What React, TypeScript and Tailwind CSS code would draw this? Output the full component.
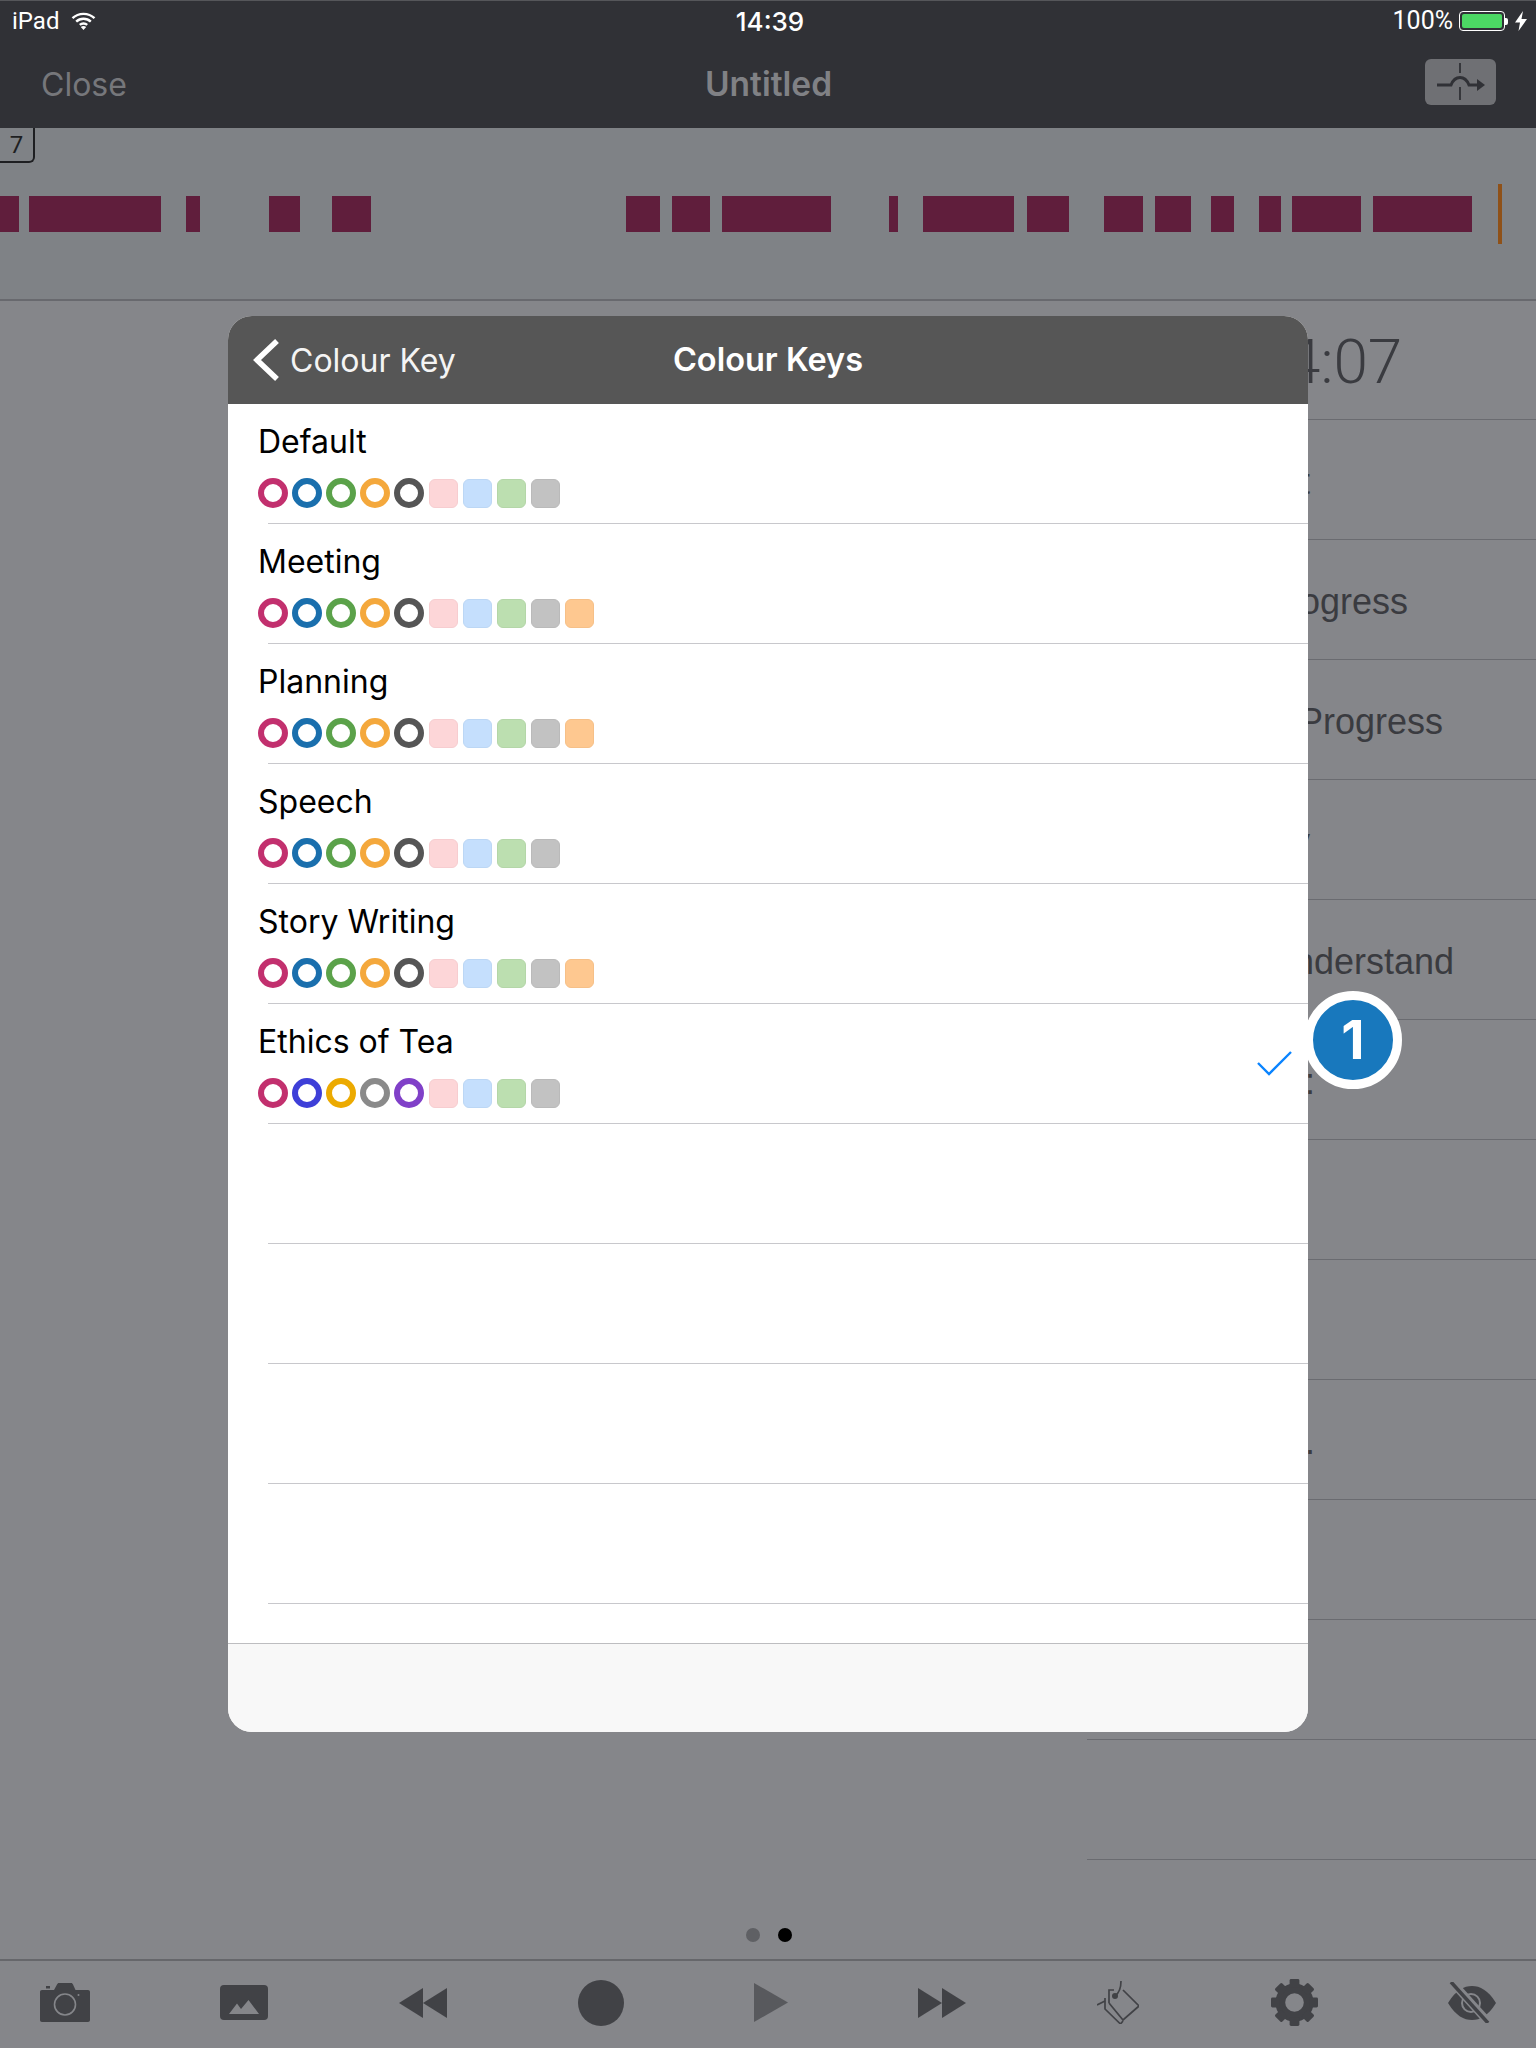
const bars: [number, number][] = [
  [0, 19], [29, 132], [186, 14], [269, 31], [332, 39], [626, 34], [672, 38], [722, 109], [889, 9], [923, 91],
  [1027, 42], [1104, 39], [1155, 36], [1211, 23], [1259, 22], [1292, 69], [1373, 99],
];

const ringSets = {
  standard: ["border-[#c2306e]", "border-[#1a6fad]", "border-[#5ba24a]", "border-[#f4a83c]", "border-[#555555]"],
  ethics: ["border-[#c2306e]", "border-[#3e3fd8]", "border-[#ecaa00]", "border-[#8a8a8a]", "border-[#8040c8]"],
};

const baseSquares = [
  "bg-[#fdd6d8] border-[#f7cdd0]",
  "bg-[#c5dffd] border-[#bcd7f5]",
  "bg-[#bcdfb0] border-[#b4d6a8]",
  "bg-[#c2c2c2] border-[#bababa]",
];
const orangeSquare = "bg-[#fec890] border-[#f6c088]";

const rows = [
  { name: "Default", rings: ringSets.standard, squares: baseSquares },
  { name: "Meeting", rings: ringSets.standard, squares: [...baseSquares, orangeSquare] },
  { name: "Planning", rings: ringSets.standard, squares: [...baseSquares, orangeSquare] },
  { name: "Speech", rings: ringSets.standard, squares: baseSquares },
  { name: "Story Writing", rings: ringSets.standard, squares: [...baseSquares, orangeSquare] },
  { name: "Ethics of Tea", rings: ringSets.ethics, squares: baseSquares, checked: true },
  { name: "" }, { name: "" }, { name: "" }, { name: "" },
];

const listRows = [
  { text: "t", ml: "ml-[213px]" },
  { text: "In Progress", ml: "ml-[137px]" },
  { text: "In Progress", ml: "ml-[172px]" },
  { text: "y", ml: "ml-[205px]" },
  { text: "Understand", ml: "ml-[181px]" },
  { text: ":", ml: "ml-[218px]" },
  { text: "", ml: "" }, { text: "", ml: "" },
  { text: ".", ml: "ml-[218px]" },
  { text: "", ml: "" }, { text: "", ml: "" }, { text: "", ml: "" },
];

function Wifi() {
  return (
    <svg width="25" height="18" viewBox="0 0 25 18" fill="none" stroke="#fff" strokeWidth="2.4">
      <path d="M1.5 6.2C7.5 .4 17.5 .4 23.5 6.2" />
      <path d="M5.2 9.6C9.2 5.8 15.8 5.8 19.8 9.6" />
      <path d="M8.8 12.8C10.8 11 14.2 11 16.2 12.8" />
      <path d="M12.5 18L9.8 15C11.4 13.8 13.6 13.8 15.2 15Z" fill="#fff" stroke="none" />
    </svg>
  );
}

function Toolbar() {
  const dark = "#414246";
  return (
    <div className="h-[89px] border-t-2 border-[#66676b] flex items-center justify-between px-[40px] pb-[4px]">
      <svg width="50" height="39" viewBox="0 0 50 39">
        <path d="M2 7H14L17 1.5C17.4.6 18 0 19 0H31C32 0 32.7.6 33 1.5L35.500 7H48C49.200 7 50 7.800 50 9V37C50 38.200 49.200 39 48 39H2C.8 39 0 38.200 0 37V9C0 7.800.8 7 2 7Z" fill={dark} />
        <circle cx="25" cy="21.500" r="10.500" fill="none" stroke="#85868a" strokeWidth="1.600" />
        <rect x="6" y="3" width="4" height="2.500" fill={dark} />
        <circle cx="38.500" cy="12" r="1" fill="#85868a" />
      </svg>
      <svg width="48" height="35" viewBox="0 0 48 35">
        <rect width="48" height="35" rx="4" fill={dark} />
        <path d="M9 29L17 18.500L21 24L28.500 15L39 29Z" fill="#85868a" />
      </svg>
      <svg width="48" height="30" viewBox="0 0 48 30" fill={dark}>
        <path d="M24 0V30L0 15Z" />
        <path d="M48 0V30L24 15Z" />
      </svg>
      <div className="w-[46px] h-[46px] ml-[1px] rounded-full bg-[#414246]" />
      <svg width="34" height="39" viewBox="0 0 34 39" fill="#58595d">
        <path d="M0 0L34 19.500L0 39Z" />
      </svg>
      <svg width="48" height="30" viewBox="0 0 48 30" fill={dark}>
        <path d="M0 0V30L24 15Z" />
        <path d="M24 0V30L48 15Z" />
      </svg>
      <svg width="42" height="43" viewBox="0 0 42 43" fill="none" stroke={dark} strokeWidth="1.700">
        <path d="M0 24L8 20" />
        <path d="M8 17V28L23.500 43L26 40" />
        <path d="M12 22V9H17M26 9L42 25L26 39L12 22" />
        <path d="M18 15C22 12 24 6 24 0" />
        <circle cx="18" cy="15" r="3" fill={dark} stroke="none" />
      </svg>
      <svg width="47" height="47" viewBox="0 0 48 48" fill={dark} className="ml-[2px]">
        <circle cx="24" cy="24" r="14.500" fill="none" stroke={dark} strokeWidth="10" />
        {[0, 45, 90, 135, 180, 225, 270, 315].map((a) => (
          <rect key={a} x="19" y="0" width="10" height="9" rx="1.500" transform={`rotate(${a} 24 24)`} />
        ))}
      </svg>
      <svg width="48" height="41" viewBox="0 0 48 41" fill="none">
        <path d="M0 21C8 8 16 4 24 4C32 4 40 8 48 21C40 34 32 38 24 38C16 38 8 34 0 21Z" fill={dark} />
        <circle cx="23" cy="21" r="9" stroke="#85868a" strokeWidth="2" />
        <path d="M4 0L41 41" stroke="#85868a" strokeWidth="8" />
        <path d="M3 0L40 41" stroke={dark} strokeWidth="3.500" />
      </svg>
    </div>
  );
}

export default function App() {
  return (
    <div className="relative w-[1536px] h-[2048px] overflow-hidden bg-[#85868a] flex flex-col font-['Inter',sans-serif]">
      <header className="h-[128px] bg-[#303136] shrink-0 border-t border-[#55565a]">
        <div className="h-[39px] grid grid-cols-3 items-center px-[12px] text-white text-[24px]">
          <div className="flex items-center gap-[12px]">
            <span className="font-['Roboto',sans-serif]">iPad</span>
            <Wifi />
          </div>
          <div className="text-center font-medium text-[26px] pl-[4px] pt-[1px]">14:39</div>
          <div className="flex items-center justify-end gap-[6px]">
            <span className="font-['Roboto',sans-serif] text-[25px]">100%</span>
            <div className="flex items-center">
              <div className="w-[46px] h-[20px] rounded-[4px] border border-white p-[2px]">
                <div className="w-full h-full rounded-[2px] bg-[#4cd964]" />
              </div>
              <div className="w-[3px] h-[7px] bg-white rounded-r-[2px]" />
            </div>
            <svg width="12" height="20" viewBox="0 0 12 20" fill="#fff" className="ml-[1px] mr-[-3px]">
              <path d="M8 0L0 11.500H5L3.500 20L12 8H6.500Z" />
            </svg>
          </div>
        </div>
        <div className="h-[88px] grid grid-cols-3 items-center pl-[41px] pr-[40px] text-[32px]">
          <div className="text-[#76777b] pt-[2px]">Close</div>
          <div className="text-center font-semibold text-[#808185] text-[33.500px] pt-[1px]">Untitled</div>
          <div className="flex justify-end">
            <div className="w-[71px] h-[46px] mt-[-4px] rounded-[6px] bg-[#6f7074]">
              <svg width="71" height="46" viewBox="0 0 71 46" fill="none" stroke="#303136">
                <path d="M35 4V14M35 28V41" strokeWidth="1.800" />
                <path d="M12 26H26C28 21 31 18.500 35 18.500C39 18.500 42 21 44 26H54" strokeWidth="3" />
                <path d="M52 20L60 26L52 32Z" fill="#303136" stroke="none" />
              </svg>
            </div>
          </div>
        </div>
      </header>

      <section className="relative h-[173px] shrink-0 bg-[#7f8286] border-b-2 border-[#68696e] pt-[56px]">
        <div className="absolute left-[-2px] top-0 w-[37px] h-[35px] border-2 border-t-0 border-[#1e1f22] rounded-br-[6px] flex items-center justify-center text-[24px] text-[#1e1f22] font-['Roboto',sans-serif]">
          7
        </div>
        <svg width="1536" height="60" viewBox="0 0 1536 60" className="block">
          {bars.map(([x, w]) => (
            <rect key={x} x={x} y="12" width={w} height="36" fill="#601e3c" />
          ))}
          <rect x="1498" y="0" width="4" height="60" fill="#8f5118" />
        </svg>
      </section>

      <main className="flex-1 flex flex-col">
        <div className="h-[1559px] w-[449px] ml-auto text-[#3a3b40] font-['Liberation_Sans',sans-serif] text-[36px]">
          <div className="h-[119px] border-b border-[#6a6b70] flex items-center font-['Roboto',sans-serif] font-light text-[62px] pl-[199px] pt-[3px]">
            4:07
          </div>
          {listRows.map((r, i) => (
            <div key={i} className="h-[120px] border-b border-[#6a6b70] flex items-center pt-[4px]">
              <span className={r.ml}>{r.text}</span>
            </div>
          ))}
        </div>
        <div className="flex-1 flex items-end justify-center gap-[18px] pb-[17px] pl-[1px]">
          <div className="w-[14px] h-[14px] rounded-full bg-[#5f6064]" />
          <div className="w-[14px] h-[14px] rounded-full bg-black" />
        </div>
      </main>

      <Toolbar />

      <div className="absolute left-[228px] top-[316px] w-[1080px] h-[1416px] rounded-[24px] overflow-hidden bg-white flex flex-col text-[32px] z-10">
        <div className="h-[88px] shrink-0 bg-[#565656] grid grid-cols-3 items-center text-white">
          <div className="flex items-center pl-[25px] gap-[11px]">
            <svg width="26" height="42" viewBox="0 0 26 42" fill="none" stroke="#fff" strokeWidth="5.500">
              <path d="M24 2L4 21L24 40" />
            </svg>
            <span className="whitespace-nowrap text-[#f4f4f4] text-[32px] pt-[1px]">Colour Key</span>
          </div>
          <div className="text-center font-semibold whitespace-nowrap text-[32.500px] pt-[1px]">Colour Keys</div>
          <div />
        </div>
        <div className="flex-1 overflow-hidden">
          {rows.map((r, i) => (
            <div key={i} className="h-[120px] flex flex-col">
              <div className="flex-1 flex justify-between items-center">
                <div className="pl-[30px] flex flex-col self-start pt-[18px]">
                  <div className="h-[40px] leading-[40px] text-black text-[32px]">{r.name}</div>
                  {r.rings && (
                    <div className="flex items-center gap-[4px] mt-[16px]">
                      {r.rings.map((c, j) => (
                        <div key={j} className={`w-[30px] h-[30px] rounded-full border-[6px] ${c}`} />
                      ))}
                      {r.squares.map((c, j) => (
                        <div key={j} className={`w-[29px] h-[29px] rounded-[6px] border ml-[1px] ${c}`} />
                      ))}
                    </div>
                  )}
                </div>
                {r.checked && (
                  <svg width="35" height="25" viewBox="0 0 35 25" fill="none" stroke="#0a84ff" strokeWidth="2.400" className="mr-[16px]">
                    <path d="M1 12L12 23L34 1" />
                  </svg>
                )}
              </div>
              <div className="h-px ml-[40px] bg-[#c8c8cc]" />
            </div>
          ))}
        </div>
        <div className="h-[89px] shrink-0 bg-[#f8f8f8] border-t border-[#bdbdc0]" />
      </div>

      <div className="absolute left-[1304px] top-[991px] z-20 w-[98px] h-[98px] rounded-full border-[9px] border-white bg-[#1878bd] flex items-center justify-center text-white text-[54px] font-bold leading-none">
        1
      </div>
    </div>
  );
}
